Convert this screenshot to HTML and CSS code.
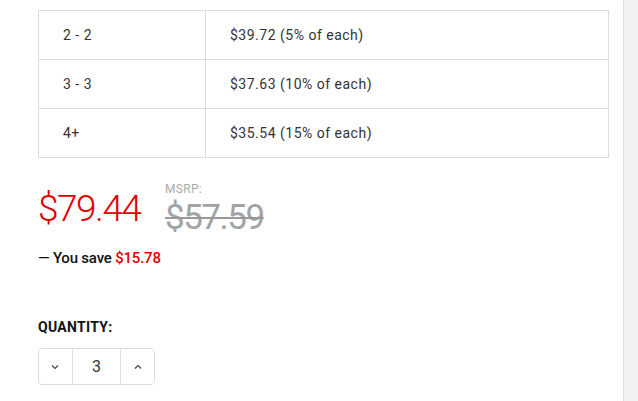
FILE: index.html
```html
<!DOCTYPE html>
<html>
<head>
<meta charset="utf-8">
<link rel="stylesheet" href="styles.css">
</head>
<body>
<div class="page">
  <main class="content">
    <table class="tiers">
      <tr><td class="qty">2 - 2</td><td>$39.72 (5% of each)</td></tr>
      <tr><td class="qty">3 - 3</td><td>$37.63 (10% of each)</td></tr>
      <tr><td class="qty">4+</td><td>$35.54 (15% of each)</td></tr>
    </table>
    <div class="prices">
      <div class="price">$79.44</div>
      <div class="msrp">
        <div class="msrp-label">MSRP:</div>
        <div class="msrp-value">$57.59</div>
      </div>
    </div>
    <div class="save">— You save <span class="red">$15.78</span></div>
    <div class="qlabel">QUANTITY:</div>
    <div class="stepper">
      <button class="step"><svg width="10" height="6" viewBox="0 0 10 6"><path d="M2 1.5 L5 4.5 L8 1.5" fill="none" stroke="#444" stroke-width="1.2"/></svg></button>
      <div class="val">3</div>
      <button class="step"><svg width="10" height="6" viewBox="0 0 10 6"><path d="M2 4.5 L5 1.5 L8 4.5" fill="none" stroke="#444" stroke-width="1.2"/></svg></button>
    </div>
  </main>
  <div class="scrolltrack"></div>
</div>
</body>
</html>
```
FILE: styles.css
```css
html, body { margin: 0; padding: 0; background: #fff; }
body { font-family: Roboto, "Liberation Sans", sans-serif; color: #222; }
.page { display: flex; height: 401px; overflow: hidden; }
.content { flex: 1; padding: 10px 14px 0 38px; }
.scrolltrack { width: 15px; background: #f1f1f1; border-left: 1px solid #dcdcdc; }
.tiers { border-collapse: collapse; width: 571px; font-size: 14px; color: #333; letter-spacing: 0.5px; }
.tiers td { border: 1px solid #dcdcdc; height: 48px; padding: 0 0 0 24px; }
.tiers td.qty { width: 142px; }
.prices { display: flex; align-items: flex-start; margin-top: 24px; }
.price { font-size: 37px; color: #e10000; font-weight: 300; line-height: 1; margin-top: 8px; width: 127px; letter-spacing: -1.5px; }
.msrp-label { font-size: 12px; color: #aaa; line-height: 14px; letter-spacing: 0.3px; }
.msrp-value { font-size: 35px; color: #a0a4a8; text-decoration: line-through; text-decoration-color: #999; text-decoration-thickness: 2px; line-height: 1; margin-top: 4px; letter-spacing: -1.5px; }
.save { font-size: 15px; font-weight: 500; color: #111; margin-top: 14px; letter-spacing: -0.2px; }
.red { color: #e10000; }
.qlabel { font-size: 14px; font-weight: 700; margin-top: 52px; color: #111; letter-spacing: 0.3px; }
.stepper { display: flex; margin-top: 13px; width: 115px; height: 35px; border: 1px solid #ddd; border-radius: 4px; }
.step { width: 33px; border: 0; background: #fff; padding: 0; display: flex; align-items: center; justify-content: center; border-radius: 4px; }
.val { width: 48px; border-left: 1px solid #ddd; border-right: 1px solid #ddd; display: flex; align-items: center; justify-content: center; font-size: 16px; color: #333; }
```
